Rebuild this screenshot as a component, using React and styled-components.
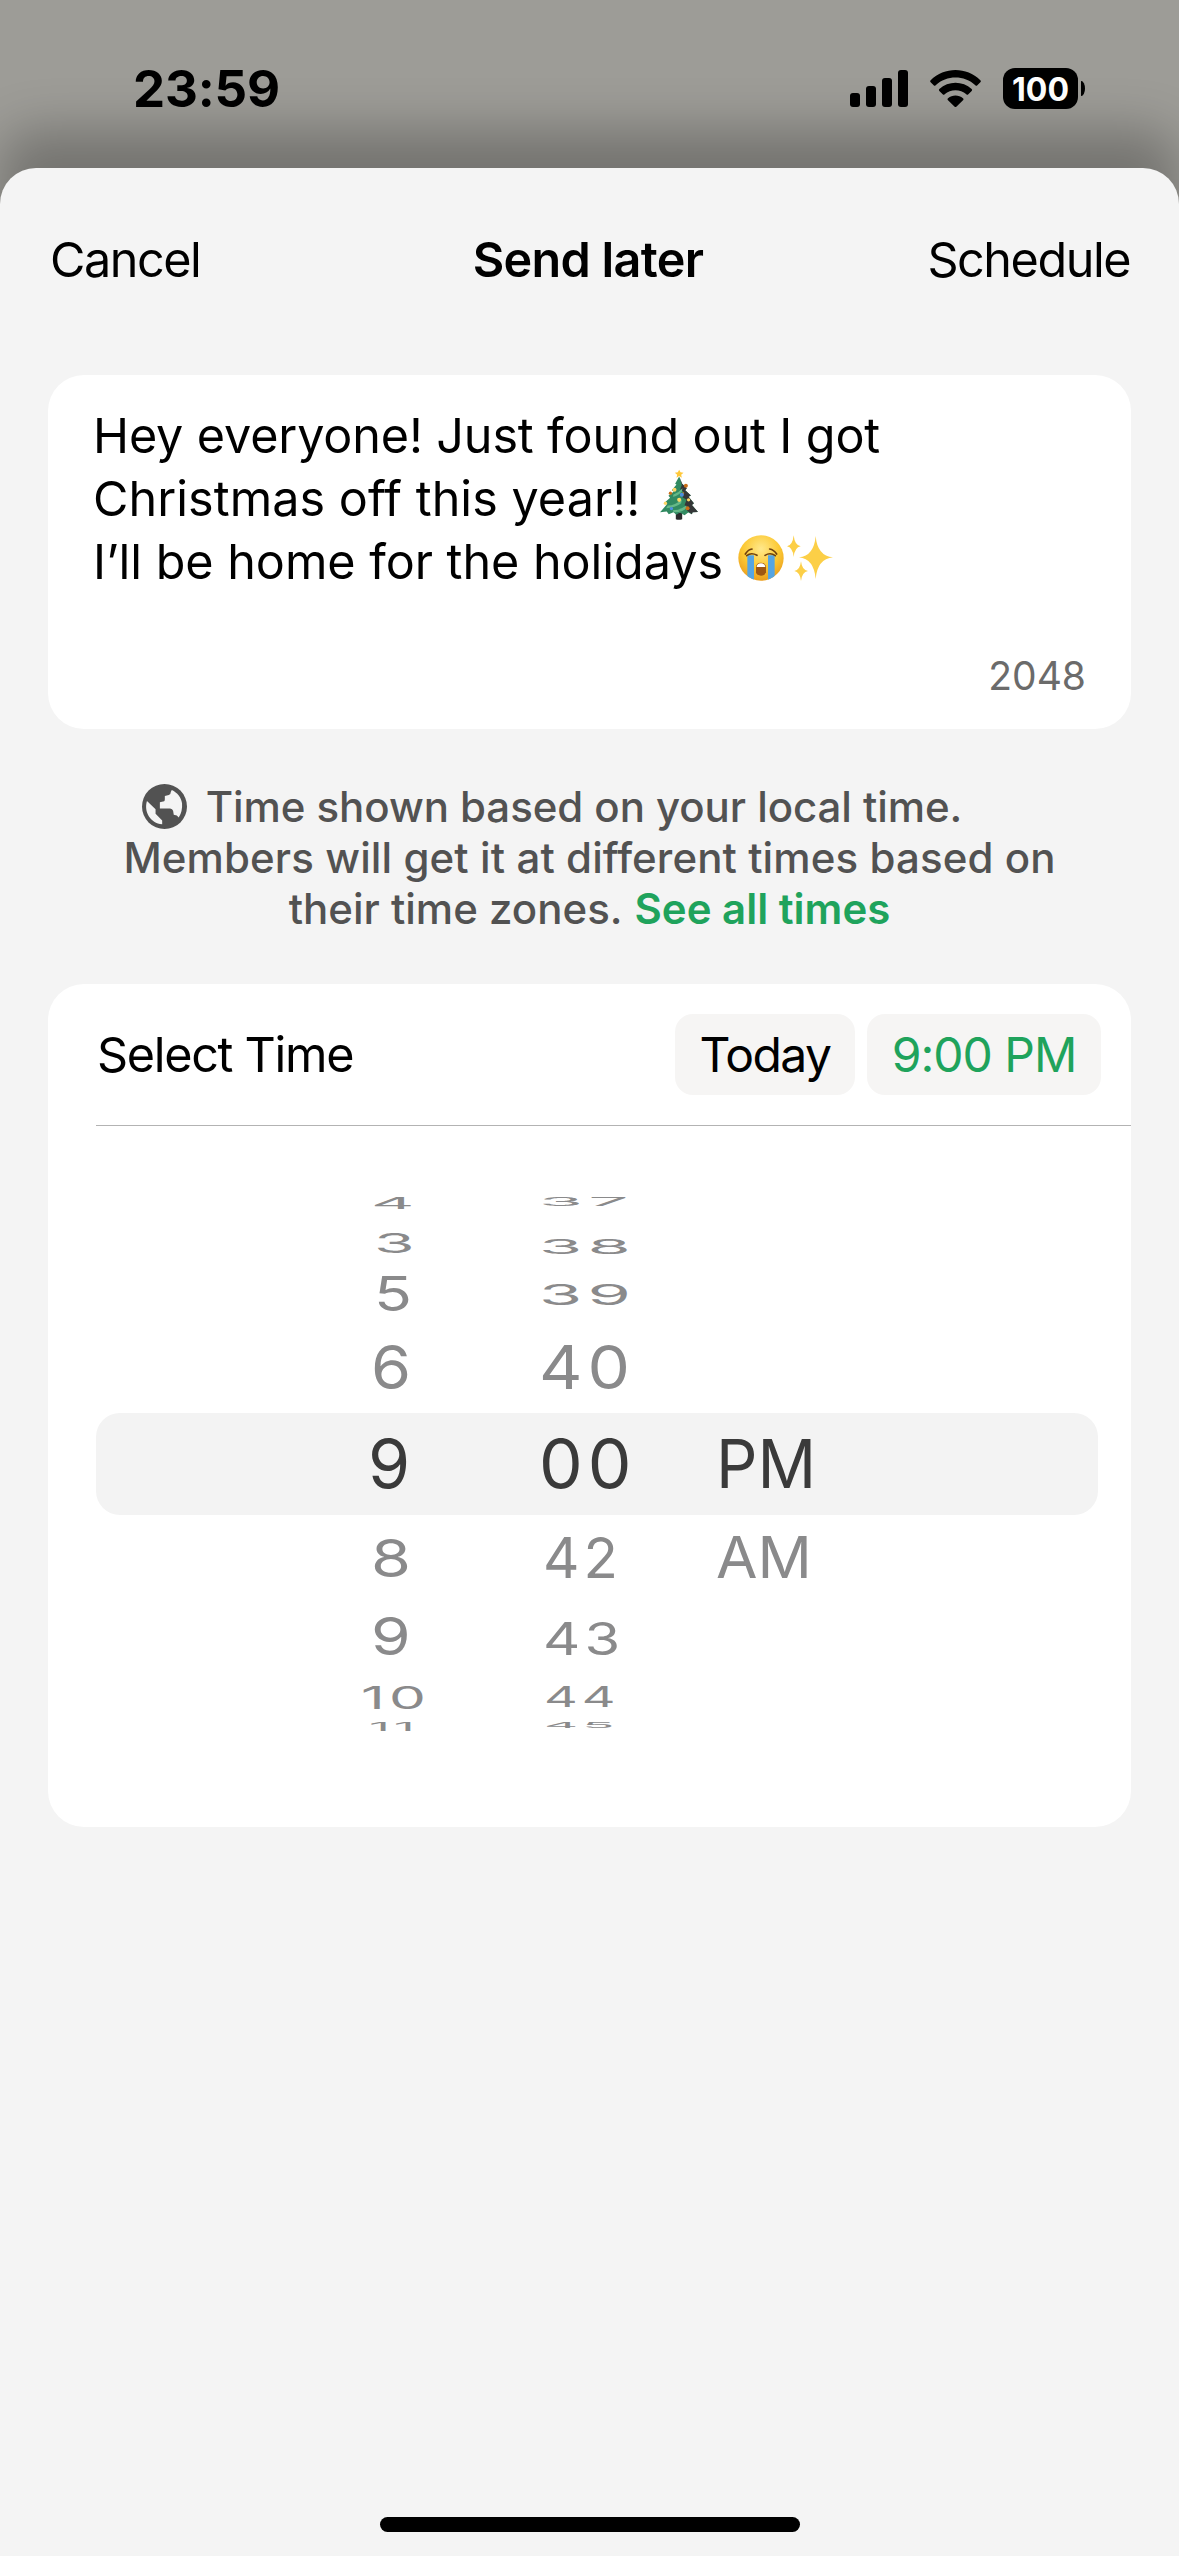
import React from 'react'
import styled, { createGlobalStyle } from 'styled-components';

const hours = [
  { text: '4', gap: 71, h: 12, x: 371, sx: 0.99 },
  { text: '3', gap: 24, h: 20.5, x: 374, sx: 0.97 },
  { text: '5', gap: 21.5, h: 35.5, x: 373.5, sx: 0.92 },
  { text: '6', gap: 33.5, h: 45, x: 371, sx: 0.95 },
  { text: '9', gap: 48.5, h: 50.5, x: 368, sx: 1, selected: true },
  { text: '8', gap: 50.5, h: 39, x: 371, sx: 0.95 },
  { text: '9', gap: 39, h: 39, x: 371, sx: 0.94 },
  { text: '10', gap: 30.5, h: 23, x: 361, sx: 0.86 },
  { text: '11', gap: 13, h: 9, x: 369, sx: 0.76 },
];

const minutes = [
  { text: '37', gap: 71, h: 9, x: 538.5, sx: 1.05 },
  { text: '38', gap: 33, h: 15, x: 538.5, sx: 1.03 },
  { text: '39', gap: 30, h: 21, x: 538.5, sx: 1.03 },
  { text: '40', gap: 39, h: 45, x: 539, sx: 0.99 },
  { text: '00', gap: 48.5, h: 50.5, x: 539, sx: 1.02, selected: true },
  { text: '42', gap: 47.5, h: 42, x: 543, sx: 0.83 },
  { text: '43', gap: 45, h: 33, x: 543, sx: 0.85 },
  { text: '44', gap: 30.5, h: 21, x: 543.5, sx: 0.77 },
  { text: '45', gap: 15, h: 6, x: 543.5, sx: 0.78 },
];

const periods = [
  { text: 'PM', gap: 311.5, h: 50.5, x: 716, sx: 0.955, selected: true },
  { text: 'AM', gap: 47.5, h: 43, x: 715.5, sx: 0.885 },
];

const SignalIcon = () => (
  <svg width="58" height="37" viewBox="0 0 58 37">
    <rect x="0" y="23" width="10" height="14" rx="3" />
    <rect x="16" y="16" width="10" height="21" rx="3" />
    <rect x="32" y="8" width="10" height="29" rx="3" />
    <rect x="48" y="0" width="10" height="37" rx="3" />
  </svg>
);

const WifiIcon = () => (
  <svg width="51" height="37" viewBox="0 0 153 111">
    <path d="M2 31 C43 -10 110 -10 151 31 Q154 34 151 37 L142 46 Q139 49 136 46 C103 15 50 15 17 46 Q14 49 11 46 L2 37 Q-1 34 2 31Z" />
    <path d="M28 57 C55 32 98 32 125 57 Q128 60 125 63 L115 73 Q112 76 109 73 C91 57 62 57 44 73 Q41 76 38 73 L28 63 Q25 60 28 57Z" />
    <path d="M54 85 C67 74 86 74 99 85 Q102 88 99 91 L79 110 Q76 112 74 110 L54 91 Q51 88 54 85Z" />
  </svg>
);

const GlobeIcon = () => (
  <svg width="45" height="45" viewBox="37 43 136 136">
    <circle cx="105" cy="111" r="68" fill="#525252" />
    <path d="M127 61 C144 69 156 84 158 101 Q160 126 148 144 Q144 137 133 136 L131 124 Q129 118 122 117 L91 117 L91 98 L104 95 Q106 94 106 89 L106 79 L118 76 Q124 74 124 67Z" fill="#f4f4f4" />
    <path d="M52 94 L78 119 L78 133 L98 153 L98 165 C62 160 42 127 52 94Z" fill="#f4f4f4" />
  </svg>
);

const TreeEmoji = () => (
  <svg width="38" height="51" viewBox="54 28 113 152" role="img" aria-label="Christmas tree">
    <path d="M101 158 H120 V178 Q110 181 101 178Z" fill="#2b2a2c" />
    <path d="M111 50 L99 72 L103 74 L89 91 L95 95 L79 108 L84 114 L68 128 L74 134 L54 157 L74 155 L80 163 L94 157 L103 164 L113 158 L127 166 L138 158 L149 163 L151 157 L167 156 L149 135 L155 130 L139 111 L146 107 L129 91 L133 85 L119 71Z" fill="#318a61" />
    <path d="M112 52 L120 72 L134 85 L129 91 L146 107 L139 111 L155 130 L149 135 L167 156 L151 157 L149 163 L134 152 L139 143 L127 136 L133 120 L121 112 L126 98 L114 88 L119 76Z" fill="#353638" />
    <path d="M94 104 Q109 99 121 85 L119 95 Q108 108 92 111Z M77 137 Q99 137 119 119 L117 130 Q99 144 72 145Z M92 151 Q115 151 132 137 L133 145 Q116 159 94 156Z" fill="#66b988" />
    <path d="M111 30 L115 38 L124 39 L117 45 L119 54 L111 49 L103 54 L105 45 L98 39 L107 38Z" fill="#ffc83a" />
    <g fill="#ffd766">
      <circle cx="97" cy="90" r="6" /><circle cx="111" cy="120" r="6" />
      <circle cx="70" cy="130" r="5" /><circle cx="139" cy="120" r="5" />
    </g>
    <g fill="#c96e19">
      <circle cx="131" cy="78" r="6" /><circle cx="85" cy="100" r="5" />
      <circle cx="136" cy="145" r="6" /><circle cx="123" cy="100" r="3" />
    </g>
    <g fill="#4d8fe0">
      <circle cx="119" cy="105" r="6" /><circle cx="88" cy="146" r="5" />
    </g>
  </svg>
);

const CryingEmoji = () => (
  <svg width="46" height="46" viewBox="292 224 138 138" role="img" aria-label="Crying face">
    <defs>
      <radialGradient id="face" cx="0.5" cy="0.3" r="0.72">
        <stop offset="0" stopColor="#ffe88c" />
        <stop offset="0.55" stopColor="#fcc934" />
        <stop offset="1" stopColor="#e99b1c" />
      </radialGradient>
      <clipPath id="faceClip"><circle cx="361" cy="293" r="68" /></clipPath>
    </defs>
    <circle cx="361" cy="293" r="68" fill="url(#face)" />
    <g clipPath="url(#faceClip)" fill="#55a5e3">
      <path d="M320 285 H340 V362 H320Z" />
      <path d="M382 285 H402 V362 H382Z" />
    </g>
    <g fill="none" stroke="#70420f" strokeWidth="5" strokeLinecap="round">
      <path d="M314 281 Q323 267 334 266" />
      <path d="M387 266 Q399 268 408 281" />
      <path d="M318 286 Q332 275 349 285" />
      <path d="M373 285 Q389 275 404 286" />
    </g>
    <path d="M346 322 Q346 307 361 307 Q376 307 376 322 L376 336 Q373 346 361 346 Q348 346 346 336Z" fill="#9e5713" />
    <path d="M348 320 Q349 309 361 309 Q373 309 374 320Z" fill="#fff" />
  </svg>
);

const SparklesEmoji = () => (
  <svg width="46" height="46" viewBox="440 225 138 138" role="img" aria-label="Sparkles">
    <g fill="#fccf47">
      <path d="M526 228 Q531 288 578 292 Q531 297 526 357 Q521 297 476 292 Q521 288 526 228Z" />
      <path d="M460 226 Q463 256 481 259 Q463 262 460 291 Q457 262 440 259 Q457 256 460 226Z" />
      <path d="M482 304 Q485 331 503 333 Q485 336 482 363 Q479 336 462 333 Q479 331 482 304Z" />
    </g>
  </svg>
);

const Wheel = ({ items, left, spacing }) => (
  <Column>
    {items.map((item, index) => (
      <WheelItem key={index} $gap={item.gap} $h={item.h} $shift={item.x - left} $selected={item.selected}>
        <WheelText $sx={item.sx} $sy={item.h / 50.5} $spacing={spacing}>{item.text}</WheelText>
      </WheelItem>
    ))}
  </Column>
);

const App = () => {
  return (
    <Screen>
      <GlobalStyle />
      <StatusBar>
        <Clock>23:59</Clock>
        <StatusIcons>
          <SignalIcon />
          <WifiIcon />
          <Battery>
            <BatteryBody>100</BatteryBody>
            <BatteryTip />
          </Battery>
        </StatusIcons>
      </StatusBar>
      <Sheet>
        <SheetHeader>
          <HeaderButton>Cancel</HeaderButton>
          <Title>Send later</Title>
          <HeaderButton $end>Schedule</HeaderButton>
        </SheetHeader>
        <MessageCard>
          <Message>
            <MessageLine $spacing={-0.13}>Hey everyone! Just found out I got</MessageLine>
            <MessageLine $spacing={0.05}>Christmas off this year!!<EmojiSlot $left={20} $top={2}><TreeEmoji /></EmojiSlot></MessageLine>
            <MessageLine $spacing={-0.03}>I’ll be home for the holidays<EmojiSlot $left={15} $top={5}><CryingEmoji /><SparklesEmoji /></EmojiSlot></MessageLine>
          </Message>
          <Counter>2048</Counter>
        </MessageCard>
        <Info>
          <InfoLine $gap={19} $trail={75} $spacing={-0.06}><GlobeIcon /><span>Time shown based on your local time.</span></InfoLine>
          <InfoLine $spacing={0.1}>Members will get it at different times based on</InfoLine>
          <InfoLine $gap={12}><span>their time zones.</span><SeeAll>See all times</SeeAll></InfoLine>
        </Info>
        <TimeCard>
          <TimeHeader>
            <TimeLabel>Select Time</TimeLabel>
            <Chips>
              <Chip $width={180} $spacing={-1.5}>Today</Chip>
              <Chip $width={234} $spacing={-1}>9:00 PM</Chip>
            </Chips>
          </TimeHeader>
          <Divider />
          <Picker>
            <SelectedBar />
            <Columns>
              <Wheel items={hours} left={361} spacing={5} />
              <Wheel items={minutes} left={538.5} spacing={5} />
              <Wheel items={periods} left={715.5} spacing={0} />
            </Columns>
          </Picker>
        </TimeCard>
        <HomeIndicator />
      </Sheet>
    </Screen>
  )
}

const GlobalStyle = createGlobalStyle`
  * {
    box-sizing: border-box;
  }
  body {
    margin: 0;
    background: #9d9c97;
    font-family: Inter, "Liberation Sans", sans-serif;
    color: #000;
  }
  svg {
    display: block;
    flex: none;
  }
`;

const Screen = styled.div`
  display: flex;
  flex-direction: column;
  width: 1179px;
  height: 2556px;
  overflow: hidden;
  background: #9d9c97;
`;

const StatusBar = styled.div`
  display: flex;
  justify-content: space-between;
  align-items: center;
  height: 168px;
  padding: 9px 94px 0 133px;
`;

const Clock = styled.div`
  font-size: 51px;
  font-weight: 650;
  letter-spacing: -0.2px;
  line-height: 60px;
`;

const StatusIcons = styled.div`
  display: flex;
  align-items: center;
  gap: 22px;
`;

const Battery = styled.div`
  display: flex;
  align-items: center;
  gap: 3px;
`;

const BatteryBody = styled.div`
  width: 75px;
  height: 41px;
  border-radius: 12px;
  background: #000;
  color: #fff;
  font-size: 32px;
  font-weight: 700;
  line-height: 43px;
  text-align: center;
`;

const BatteryTip = styled.div`
  width: 4px;
  height: 15px;
  border-radius: 0 4px 4px 0 / 0 8px 8px 0;
  background: #000;
`;

const Sheet = styled.div`
  display: flex;
  flex-direction: column;
  flex: 1;
  padding: 0 48px;
  border-radius: 36px 36px 0 0;
  background: #f4f4f4;
  box-shadow: 0 -38px 50px rgba(0, 0, 0, 0.26);
`;

const SheetHeader = styled.div`
  display: grid;
  grid-template-columns: 1fr auto 1fr;
  align-items: center;
  height: 182px;
  margin-bottom: 25px;
`;

const HeaderButton = styled.div`
  padding: ${(p) => (p.$end ? '0 1px 0 0' : '0 0 0 2px')};
  font-size: 48.5px;
  letter-spacing: -1.45px;
  text-align: ${(p) => (p.$end ? 'right' : 'left')};
`;

const Title = styled.div`
  padding-right: 3px;
  font-size: 48.5px;
  font-weight: 600;
  letter-spacing: -0.7px;
`;

const MessageCard = styled.div`
  display: flex;
  flex-direction: column;
  justify-content: space-between;
  height: 354px;
  padding: 29px 45px 29px;
  border-radius: 36px;
  background: #fff;
`;

const Message = styled.div`
  font-size: 48.5px;
  line-height: 63px;
`;

const MessageLine = styled.div`
  display: flex;
  height: 63px;
  white-space: nowrap;
  letter-spacing: ${(p) => p.$spacing}px;
`;

const EmojiSlot = styled.span`
  display: flex;
  gap: 3px;
  margin: ${(p) => p.$top}px 0 0 ${(p) => p.$left}px;
`;

const Counter = styled.div`
  align-self: flex-end;
  color: #6b6b6b;
  font-size: 39px;
  line-height: 48px;
`;

const Info = styled.div`
  margin: 52px 0 50px;
  color: #525252;
  font-size: 42px;
  font-weight: 500;
`;

const InfoLine = styled.div`
  display: flex;
  justify-content: center;
  align-items: center;
  gap: ${(p) => p.$gap || 20}px;
  height: 51px;
  padding-right: ${(p) => p.$trail || 0}px;
  letter-spacing: ${(p) => p.$spacing || 0}px;
  white-space: nowrap;
`;

const SeeAll = styled.span`
  color: #1fa35c;
  font-weight: 600;
`;

const TimeCard = styled.div`
  height: 843px;
  border-radius: 36px;
  background: #fff;
`;

const TimeHeader = styled.div`
  display: flex;
  justify-content: space-between;
  align-items: center;
  height: 141px;
  padding: 0 30px 0 49px;
`;

const TimeLabel = styled.div`
  font-size: 48.5px;
  letter-spacing: -1.3px;
`;

const Chips = styled.div`
  display: flex;
  gap: 12px;
`;

const Chip = styled.div`
  width: ${(p) => p.$width}px;
  height: 81px;
  border-radius: 18px;
  background: #f6f5f4;
  color: #000;
  font-size: 48px;
  letter-spacing: ${(p) => p.$spacing}px;
  line-height: 81px;
  text-align: center;
  white-space: nowrap;

  &:last-child {
    color: #1fa35c;
  }
`;

const Divider = styled.div`
  height: 1px;
  margin-left: 48px;
  background: #b3b3b3;
`;

const Picker = styled.div`
  display: grid;
  height: 701px;
`;

const SelectedBar = styled.div`
  grid-area: 1 / 1;
  height: 102px;
  margin: 287px 33px 0 48px;
  border-radius: 24px;
  background: #f3f3f3;
`;

const Columns = styled.div`
  grid-area: 1 / 1;
  display: grid;
  grid-template-columns: 177.5px 177px 1fr;
  padding-left: 313px;
`;

const Column = styled.div`
  display: flex;
  flex-direction: column;
`;

const WheelItem = styled.div`
  display: flex;
  align-items: center;
  height: ${(p) => p.$h}px;
  margin-top: ${(p) => p.$gap}px;
  padding-left: ${(p) => p.$shift}px;
  color: ${(p) => (p.$selected ? '#3a3a3a' : '#8a8a8b')};
`;

const WheelText = styled.span`
  font-size: 68px;
  letter-spacing: ${(p) => p.$spacing}px;
  line-height: 1;
  transform: scale(${(p) => p.$sx}, ${(p) => p.$sy});
  transform-origin: left center;
`;

const HomeIndicator = styled.div`
  width: 420px;
  height: 15px;
  margin: auto auto 24px;
  border-radius: 8px;
  background: #000;
`;

export default App
